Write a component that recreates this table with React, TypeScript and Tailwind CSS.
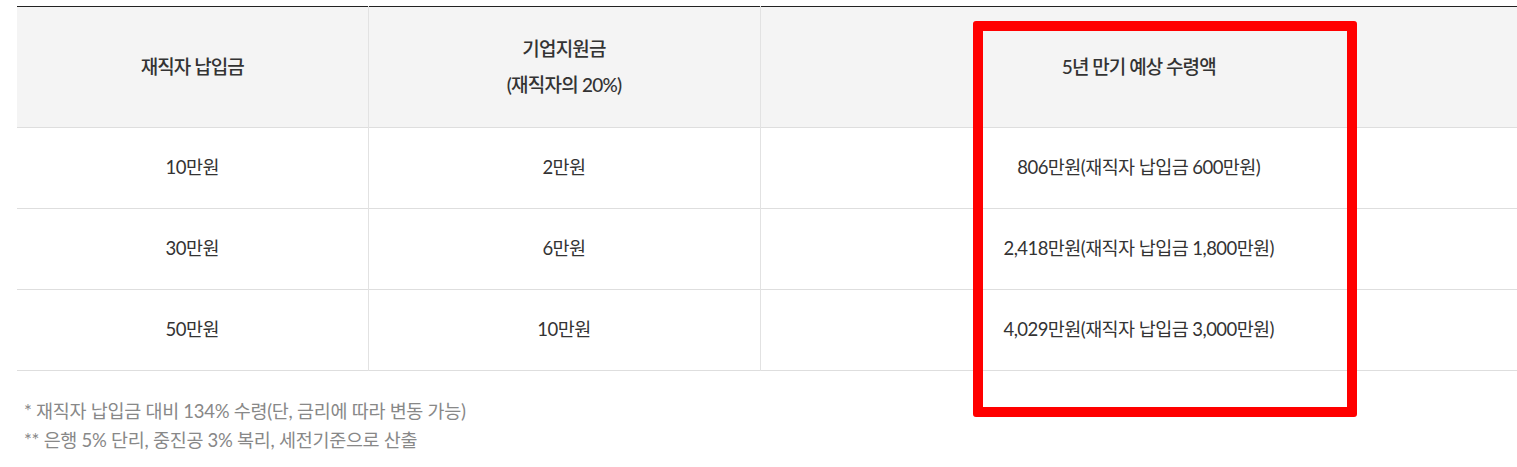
const rows = [
  { pay: '10만원', support: '2만원', total: '806만원(재직자 납입금 600만원)' },
  { pay: '30만원', support: '6만원', total: '2,418만원(재직자 납입금 1,800만원)' },
  { pay: '50만원', support: '10만원', total: '4,029만원(재직자 납입금 3,000만원)' },
];

const font = { fontFamily: "Lato, 'Noto Sans CJK KR', sans-serif" };

const App = () => {
  return (
    <div className="relative w-[1517px] h-[467px] overflow-hidden bg-white pt-[6px] pl-[17px]" style={font}>
      <table className="w-full table-fixed border-collapse border-t border-[#222]">
        <colgroup>
          <col className="w-[351px]" />
          <col className="w-[392px]" />
          <col />
        </colgroup>
        <thead>
          <tr className="h-[121px] bg-[#f4f4f4] border-b border-[#dedede]">
            <th className="border-r border-[#e2e2e2] text-[19px] font-medium text-[#333] tracking-[-0.05em]">
              재직자 납입금
            </th>
            <th className="border-r border-[#e2e2e2] text-[19px] font-medium text-[#333] tracking-[-0.04em] leading-[36px]">
              기업지원금
              <br />
              (재직자의 20%)
            </th>
            <th className="text-[19px] font-medium text-[#333] tracking-[-0.05em]">
              5년 만기 예상 수령액
            </th>
          </tr>
        </thead>
        <tbody>
          {rows.map((r) => (
            <tr key={r.pay} className="h-[81px] border-b border-[#dedede]">
              <td className="border-r border-[#e2e2e2] text-center text-[18.5px] text-[#333] tracking-[-0.03em]">{r.pay}</td>
              <td className="border-r border-[#e2e2e2] text-center text-[18.5px] text-[#333] tracking-[-0.03em]">{r.support}</td>
              <td className="text-center text-[18.5px] text-[#333] tracking-[-0.03em]">{r.total}</td>
            </tr>
          ))}
        </tbody>
      </table>

      <div className="mt-[26px] pl-[7px] text-[18.5px] leading-[29px] text-[#888] tracking-[-0.015em]">
        <p>* 재직자 납입금 대비 134% 수령(단, 금리에 따라 변동 가능)</p>
        <p>** 은행 5% 단리, 중진공 3% 복리, 세전기준으로 산출</p>
      </div>

      {/* annotation box */}
      <div className="absolute left-[973px] top-[21px] w-[384px] h-[396px] border-[10px] border-[#ff0000] rounded-[3px]" />
    </div>
  );
};

export default App;
